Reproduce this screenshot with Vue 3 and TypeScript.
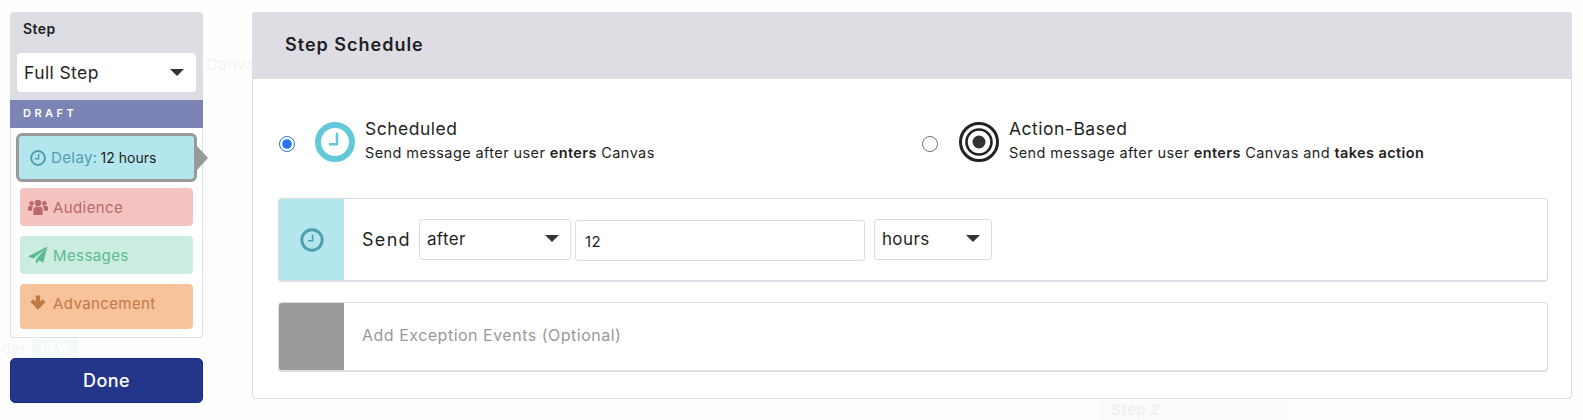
<script setup lang="ts">
import { ref } from "vue";

type Step = { label: string; kind: string };

const steps: Step[] = [
  { label: "Audience", kind: "audience" },
  { label: "Messages", kind: "messages" },
  { label: "Advancement", kind: "advancement" },
];

const schedule = ref("scheduled");
const stepView = ref("full");
const sendWhen = ref("after");
const amount = ref("12");
const unit = ref("hours");
</script>

<template>
  <div class="page">
    <div class="ghosts">
      <span class="ghost g-canvas">Canvas</span>
      <span class="ghost g-der">der</span>
      <span class="ghost g-new">NEW</span>
      <div class="ghost-box"><span class="ghost g-step">Step 2</span></div>
    </div>

    <aside class="sidebar">
      <div class="side-panel">
        <div class="side-head">
          <div class="side-title">Step</div>
          <div class="select-wrap side-select">
            <select v-model="stepView">
              <option value="full">Full Step</option>
            </select>
            <i class="caret"></i>
          </div>
        </div>
        <div class="draft">DRAFT</div>
        <div class="side-body">
          <div class="step-card delay">
            <span class="icon-slot">
              <svg viewBox="0 0 16 16" width="16" height="16">
                <circle cx="8" cy="8" r="6.9" fill="none" stroke="currentColor" stroke-width="2" />
                <path d="M8.6 3.8v5H4.8" fill="none" stroke="currentColor" stroke-width="1.4" />
              </svg>
            </span>
            <span>Delay:</span>
            <span class="delay-value">12 hours</span>
            <i class="pointer"></i>
          </div>
          <div v-for="step in steps" :key="step.kind" class="step-card" :class="step.kind">
            <span class="icon-slot">
              <svg v-if="step.kind === 'audience'" viewBox="0 0 20 18" width="20" height="18">
                <circle cx="10" cy="5" r="3.2" fill="currentColor" />
                <circle cx="3.6" cy="5.2" r="2.3" fill="currentColor" />
                <circle cx="16.4" cy="5.2" r="2.3" fill="currentColor" />
                <path d="M5.4 17V11.6C5.4 9.8 6.8 8.8 8 8.8h4c1.3 0 2.6 1 2.6 2.8V17z" fill="currentColor" />
                <path d="M0 12.8V10c0-1.3 1-2.2 2-2.2h2.6c.3 0 .5.1.7.2-.8.7-1.2 1.9-1.2 3.2v1.6zM20 12.8V10c0-1.3-1-2.2-2-2.2h-2.6c-.3 0-.5.1-.7.2.8.7 1.2 1.9 1.2 3.2v1.6z" fill="currentColor" />
              </svg>
              <svg v-else-if="step.kind === 'messages'" viewBox="0 0 20 18" width="20" height="18">
                <path d="M19.4.4 0 10.4l5.4 2.2L16.6 3.6 8 13.6V18l3-3.4 4.4 1.8z" fill="currentColor" />
              </svg>
              <svg v-else viewBox="0 0 16 16" width="16" height="16">
                <path d="M5.8 0.4h4.4v6.4l2.6-2.5 2.8 2.8L8 14.8 .4 7.1l2.8-2.8 2.6 2.5z" fill="currentColor" />
              </svg>
            </span>
            <span>{{ step.label }}</span>
          </div>
        </div>
      </div>
      <button class="done" type="button">Done</button>
    </aside>

    <main class="schedule">
      <header class="schedule-head">Step Schedule</header>
      <div class="schedule-body">
        <div class="options">
          <label class="option">
            <input v-model="schedule" type="radio" name="schedule" value="scheduled" />
            <svg class="option-icon" viewBox="0 0 40 40" width="40" height="40">
              <circle cx="20" cy="20" r="17" fill="none" stroke="#62c8da" stroke-width="6" />
              <path d="M22 10.7V22.3H14" fill="none" stroke="#62c8da" stroke-width="2.6" />
            </svg>
            <span class="option-text">
              <span class="option-title">Scheduled</span>
              <span class="option-desc">Send message after user <b>enters</b> Canvas</span>
            </span>
          </label>
          <label class="option option-action">
            <input v-model="schedule" type="radio" name="schedule" value="action" />
            <svg class="option-icon" viewBox="0 0 40 40" width="40" height="40">
              <circle cx="20" cy="20" r="18.5" fill="none" stroke="#222" stroke-width="3" />
              <circle cx="20" cy="20" r="12.5" fill="none" stroke="#222" stroke-width="2.6" />
              <circle cx="20" cy="20" r="6.5" fill="#333" />
            </svg>
            <span class="option-text">
              <span class="option-title">Action-Based</span>
              <span class="option-desc">Send message after user <b>enters</b> Canvas and <b>takes action</b></span>
            </span>
          </label>
        </div>

        <section class="row row-send">
          <div class="row-tab tab-blue">
            <svg viewBox="0 0 24 24" width="24" height="24">
              <circle cx="12" cy="12" r="10.2" fill="none" stroke="#4f9fb0" stroke-width="3" />
              <path d="M12.6 6.6v6.2H8" fill="none" stroke="#4f9fb0" stroke-width="1.6" />
            </svg>
          </div>
          <div class="row-content">
            <span class="send-label">Send</span>
            <div class="select-wrap when">
              <select v-model="sendWhen">
                <option value="after">after</option>
              </select>
              <i class="caret"></i>
            </div>
            <input v-model="amount" class="amount" type="text" />
            <div class="select-wrap unit">
              <select v-model="unit">
                <option value="hours">hours</option>
              </select>
              <i class="caret"></i>
            </div>
          </div>
        </section>

        <section class="row row-exception">
          <div class="row-tab tab-gray"></div>
          <div class="row-content exception-text">Add Exception Events (Optional)</div>
        </section>
      </div>
    </main>
  </div>
</template>

<style>
html,
body {
  background: #fefefe;
}
</style>

<style scoped>
.page {
  position: relative;
  display: flex;
  gap: 49px;
  width: 1583px;
  height: 420px;
  padding: 12px 11px 0 10px;
  box-sizing: border-box;
  overflow: hidden;
  font-family: Inter, Lato, sans-serif;
  letter-spacing: 0.4px;
  color: #1f1f24;
}

/* faint canvas showing through the modal backdrop */
.ghosts {
  position: absolute;
  inset: 0;
}

.ghost {
  position: absolute;
  color: #f3f3f5;
  font-size: 16px;
}

.g-canvas {
  left: 206px;
  top: 54px;
}

.g-der {
  left: 2px;
  top: 339px;
  font-size: 15px;
}

.g-new {
  left: 32px;
  top: 339px;
  padding: 0 8px;
  background: #f4faf8;
  color: #fff;
  font-size: 12px;
  font-weight: 700;
  line-height: 18px;
}

.ghost-box {
  position: absolute;
  left: 1098px;
  top: 400px;
  width: 190px;
  height: 20px;
  background: #fbfbfb;
}

.g-step {
  left: 13px;
  top: 0;
  font-size: 15px;
  font-weight: 700;
  color: #f1f1f1;
}

.sidebar,
.schedule {
  position: relative;
}

.sidebar {
  flex: 0 0 193px;
  display: flex;
  flex-direction: column;
  gap: 20px;
}

.side-panel {
  height: 326px;
  display: flex;
  flex-direction: column;
  border-radius: 4px;
}

.side-head {
  height: 89px;
  box-sizing: border-box;
  padding: 8px 7px 0;
  background: #dedde3;
  border-radius: 4px 4px 0 0;
}

.side-title {
  margin-left: 6px;
  margin-bottom: 16px;
  font-size: 14px;
  line-height: 17px;
  font-weight: 600;
}

.select-wrap {
  position: relative;
}

.select-wrap select {
  display: block;
  width: 100%;
  height: 100%;
  margin: 0;
  padding: 0 0 0 7px;
  appearance: none;
  box-sizing: border-box;
  background: #fff;
  border: 1px solid #dedde3;
  border-radius: 3px;
  outline: none;
  font: inherit;
  letter-spacing: inherit;
  color: inherit;
}

.caret {
  position: absolute;
  top: 50%;
  right: 12px;
  margin-top: -4px;
  width: 0;
  height: 0;
  border-style: solid;
  border-width: 7px 7px 0;
  border-color: #333 transparent transparent;
}

.side-select {
  height: 39px;
  font-size: 17.5px;
}

.side-select select {
  border-color: #fff;
  padding-left: 6px;
}

.draft {
  height: 28px;
  padding-left: 13px;
  background: #7c83b5;
  color: #fff;
  font-size: 11px;
  font-weight: 600;
  letter-spacing: 3.5px;
  line-height: 27px;
}

.side-body {
  flex: 1;
  display: flex;
  flex-direction: column;
  gap: 10px;
  padding: 5px 9px 8px;
  box-sizing: border-box;
  background: #fff;
  border: 1px solid #dedde3;
  border-top: 0;
  border-radius: 0 0 4px 4px;
}

.step-card {
  position: relative;
  display: flex;
  align-items: center;
  gap: 5px;
  height: 38px;
  padding-left: 8px;
  box-sizing: border-box;
  border-radius: 4px;
  font-size: 15px;
}

.icon-slot {
  flex: 0 0 20px;
  display: flex;
  justify-content: center;
}

.delay {
  height: 49px;
  margin: 0 -4px -4px;
  gap: 3px;
  padding-left: 9px;
  background: #b4e6ed;
  border: 3px solid #999;
  border-radius: 6px;
  color: #4f9fb0;
}

.delay-value {
  color: #1f1f24;
  font-size: 14px;
  letter-spacing: 0;
}

.pointer {
  position: absolute;
  top: 50%;
  right: -14px;
  margin-top: -12px;
  width: 0;
  height: 0;
  border-style: solid;
  border-width: 12px 0 12px 11px;
  border-color: transparent transparent transparent #999;
}

.audience {
  background: #f4c3c0;
  color: #b8696a;
}

.messages {
  background: #cbede0;
  color: #5dbb93;
}

.advancement {
  height: 45px;
  padding-bottom: 7px;
  background: #f6c39b;
  color: #bf7a45;
}

.done {
  height: 45px;
  padding: 0;
  background: #24368a;
  border: 1px solid #1a2b85;
  border-radius: 5px;
  color: #fff;
  font: inherit;
  letter-spacing: inherit;
  font-size: 18px;
  font-weight: 500;
}

.schedule {
  flex: 1;
  height: 387px;
  display: flex;
  flex-direction: column;
  box-sizing: border-box;
  background: #fff;
  border: 1px solid #dedde3;
  border-top: 0;
  border-radius: 4px;
}

.schedule-head {
  flex: none;
  height: 67px;
  margin: 0 -1px;
  padding: 0 0 2px 33px;
  display: flex;
  align-items: center;
  box-sizing: border-box;
  background: #dedde3;
  border-radius: 4px 4px 0 0;
  font-size: 18px;
  font-weight: 600;
  letter-spacing: 1px;
}

.schedule-body {
  padding: 42px 23px 0 25px;
}

.options {
  display: grid;
  grid-template-columns: 643px 1fr;
  height: 77px;
}

.option {
  display: flex;
  align-items: flex-start;
}

.option input {
  flex: none;
  width: 16px;
  height: 16px;
  margin: 15px 19px 0 1px;
  accent-color: #2b74f0;
}

.option-icon {
  flex: none;
  margin: 1px 10px 0 1px;
}

.option-action input {
  margin-right: 21px;
}

.option-action .option-icon {
  margin: 1px 10px 0 0;
}

.option-text {
  display: flex;
  flex-direction: column;
  margin-top: -4px;
}

.option-title {
  font-size: 17.5px;
  line-height: 24px;
  font-weight: 400;
  letter-spacing: 0.5px;
}

.option-desc {
  margin-top: 2px;
  font-size: 14.5px;
  line-height: 20px;
}

.option-desc b {
  font-weight: 600;
}

.row {
  display: flex;
  box-sizing: border-box;
  background: #fff;
  border: 1px solid #dedde3;
  border-bottom-width: 2px;
  border-radius: 4px;
  overflow: hidden;
}

.row-send {
  height: 84px;
  margin-bottom: 20px;
}

.row-exception {
  height: 70px;
}

.row-tab {
  flex: 0 0 65px;
  display: flex;
  align-items: center;
  justify-content: center;
}

.tab-blue {
  background: #b4e6ed;
}

.tab-gray {
  background: #999;
}

.row-content {
  flex: 1;
  display: flex;
  align-items: center;
  padding-left: 18px;
}

.send-label {
  font-size: 18px;
  letter-spacing: 1.3px;
  margin-right: 8px;
}

.when {
  flex: none;
  width: 152px;
  height: 41px;
  margin-top: -1px;
  font-size: 17px;
}

.amount {
  flex: none;
  width: 290px;
  height: 41px;
  margin: 1px 9px 0 4px;
  padding: 3px 0 0 9px;
  box-sizing: border-box;
  background: #fff;
  border: 1px solid #dedde3;
  border-radius: 3px;
  outline: none;
  font: inherit;
  letter-spacing: inherit;
  font-size: 15px;
  color: inherit;
}

.unit {
  flex: none;
  width: 118px;
  height: 41px;
  margin-top: -1px;
  font-size: 17px;
}

.exception-text {
  padding-bottom: 4px;
  font-size: 16px;
  letter-spacing: 0.5px;
  color: #999;
}
</style>
